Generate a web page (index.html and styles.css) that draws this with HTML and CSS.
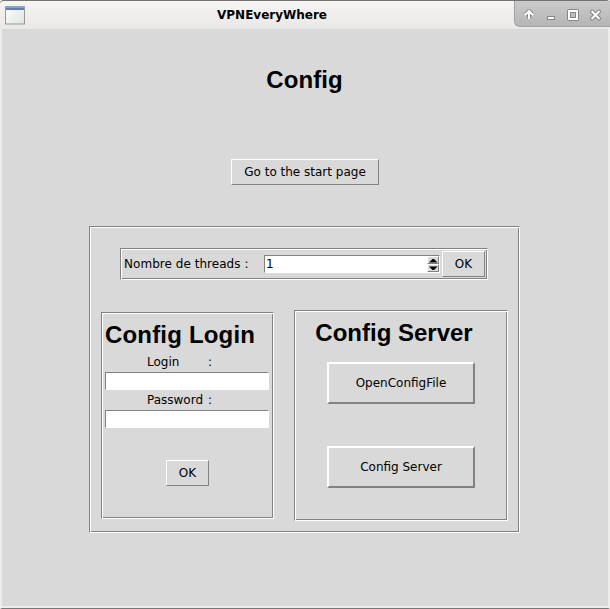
FILE: index.html
```html
<!DOCTYPE html>
<html lang="fr">
<head>
<meta charset="utf-8">
<title>VPNEveryWhere</title>
<link rel="stylesheet" href="styles.css">
</head>
<body>
<div class="window">
  <header class="titlebar">
    <svg class="app-icon" width="20" height="19" viewBox="0 0 20 19">
      <defs><linearGradient id="pane" x1="0" y1="0" x2="1" y2="1"><stop offset="0" stop-color="#fff"/><stop offset="1" stop-color="#dfe3df"/></linearGradient></defs>
      <rect x=".5" y=".5" width="19" height="17.500" fill="url(#pane)" stroke="#979a97"/>
      <rect x="0" y="0" width="20" height="2" fill="#8fa3bd"/>
      <rect x="1" y="2" width="18" height="2" fill="#5b80b4"/>
    </svg>
    <div class="title">VPNEveryWhere</div>
    <div class="controls">
      <svg width="96" height="26" viewBox="0 0 96 26">
        <g fill="none" stroke="#858585" stroke-width="4" stroke-linejoin="round">
          <path d="M15 18.500V12M11.500 14.500L15 11l3.500 3.500"/>
          <path d="M33 18h8"/>
          <path d="M55 11h8v8h-8z"/>
          <path d="M78 11.500l7 7M85 11.500l-7 7" stroke-linecap="round"/>
        </g>
        <g fill="none" stroke="#fff" stroke-width="2">
          <path d="M15 19V12M11 15L15 11l4 4"/>
          <path d="M34 18h6"/>
          <path d="M55 11h8v8h-8z"/>
          <path d="M77.500 11l8 8M85.500 11l-8 8"/>
        </g>
      </svg>
    </div>
  </header>
  <main class="page">
    <h1 class="heading">Config</h1>
    <button class="button start">Go to the start page</button>
    <section class="groove settings">
      <div class="groove threads">
        <label class="threads-label">Nombre de threads :</label>
        <div class="spinbox">
          <span class="value">1</span>
          <div class="arrows">
            <span class="arrow"><svg width="9" height="5" viewBox="0 0 9 5"><path d="M0 4.500L3.500 1h1.500L8.500 4.500z"/></svg></span>
            <span class="arrow"><svg width="9" height="5" viewBox="0 0 9 5"><path d="M0 .5h8.500L5 4H3.500z"/></svg></span>
          </div>
        </div>
        <button class="button small">OK</button>
      </div>
      <div class="panels">
        <div class="groove login">
          <h2 class="heading">Config Login</h2>
          <label class="field-label"><span>Login</span><span>:</span></label>
          <div class="entry"></div>
          <label class="field-label"><span>Password</span><span>:</span></label>
          <div class="entry"></div>
          <button class="button small submit">OK</button>
        </div>
        <div class="groove server">
          <h2 class="heading">Config Server</h2>
          <button class="button large">OpenConfigFile</button>
          <button class="button large">Config Server</button>
        </div>
      </div>
    </section>
  </main>
</div>
</body>
</html>
```
FILE: styles.css
```css
* { box-sizing: border-box; }
body {
  margin: 0;
  background: #d9d9d9;
  font: 12px/14px "DejaVu Sans", sans-serif;
  color: #000;
}
.window {
  height: 609px;
  border: solid #ededeb;
  border-width: 0 2px;
  border-bottom: 1px solid #777;
  display: flex;
  flex-direction: column;
}
.titlebar {
  height: 29px;
  margin: 0 -2px;
  border-top: 1px solid #777270;
  background: linear-gradient(#f6f5f3, #e9e8e6);
  border-radius: 4px 4px 0 0;
  display: flex;
}
.app-icon { margin: 5px 0 0 5px; }
.title {
  flex: 1;
  padding: 7px 0 0 4px;
  text-align: center;
  font-weight: bold;
  font-size: 12px;
}
.controls {
  width: 96px;
  height: 26px;
  margin-left: -1px;
  background: linear-gradient(#cbcbcb, #b5b5b5);
  border: solid #a2a2a2;
  border-width: 0 0 1px 1px;
  border-radius: 0 3px 0 6px;
}
.controls svg { display: block; margin-top: -1px; margin-left: -1px; }
.page {
  flex: 1;
  border-bottom: 2px solid #ededeb;
  display: flex;
  flex-direction: column;
  align-items: center;
}
.heading {
  margin: 0;
  font: bold 24px/28px "Liberation Sans", sans-serif;
  white-space: nowrap;
}
.page > .heading { margin-top: 37px; margin-right: 1px; letter-spacing: .1px; }
.button {
  flex: none;
  padding: 0;
  background: #d9d9d9;
  border: 1px solid;
  border-color: #fff #828282 #828282 #fff;
  font: inherit;
  color: inherit;
}
.start { width: 148px; height: 26px; margin-top: 65px; }
.small { width: 43px; height: 26px; }
.large { width: 148px; height: 42px; border-width: 2px; }
.groove {
  border: 1px solid;
  border-color: #828282 #fff #fff #828282;
  box-shadow: inset 1px 1px #fff, inset -1px -1px #828282;
}
.settings {
  width: 431px;
  height: 307px;
  margin-top: 41px;
  margin-right: 1px;
  padding: 21px 11px 11px;
}
.threads {
  width: 368px;
  height: 32px;
  margin-left: 19px;
  padding: 2px 1px 2px 3px;
  display: flex;
  align-items: center;
}
.threads-label { width: 140px; letter-spacing: .04px; }
.spinbox {
  width: 176px;
  height: 18px;
  margin-right: 2px;
  border: 1px solid;
  border-color: #828282 #fff #fff #828282;
  background: #fff;
  display: flex;
  justify-content: space-between;
  align-items: center;
}
.value { padding-left: 1px; }
.arrows { width: 12px; height: 16px; display: flex; flex-direction: column; }
.arrow {
  height: 8px;
  background: #d9d9d9;
  border: 1px solid;
  border-color: #fff #828282 #828282 #fff;
  display: flex;
  align-items: center;
  justify-content: center;
}
.panels {
  margin-top: 30px;
  display: flex;
  gap: 20px;
  align-items: flex-start;
}
.login {
  width: 173px;
  height: 207px;
  margin-top: 2px;
  padding: 8px 3px 7px;
  display: flex;
  flex-direction: column;
}
.login .heading { letter-spacing: .18px; }
.field-label {
  width: 65px;
  height: 14px;
  margin: 3px 0 3px 42px;
  display: flex;
  justify-content: space-between;
}
.login .heading + .field-label { margin-top: 6px; }
.entry {
  height: 18px;
  margin-right: 1px;
  border: 1px solid;
  border-color: #828282 #fff #fff #828282;
  background: #fff;
}
.submit { margin: 32px 0 0 61px; }
.server {
  width: 214px;
  height: 211px;
  padding: 8px 0 0;
  display: flex;
  flex-direction: column;
  align-items: center;
}
.server .heading { margin: 0 14px 15px 0; }
.server .large + .large { margin-top: 42px; }
```
